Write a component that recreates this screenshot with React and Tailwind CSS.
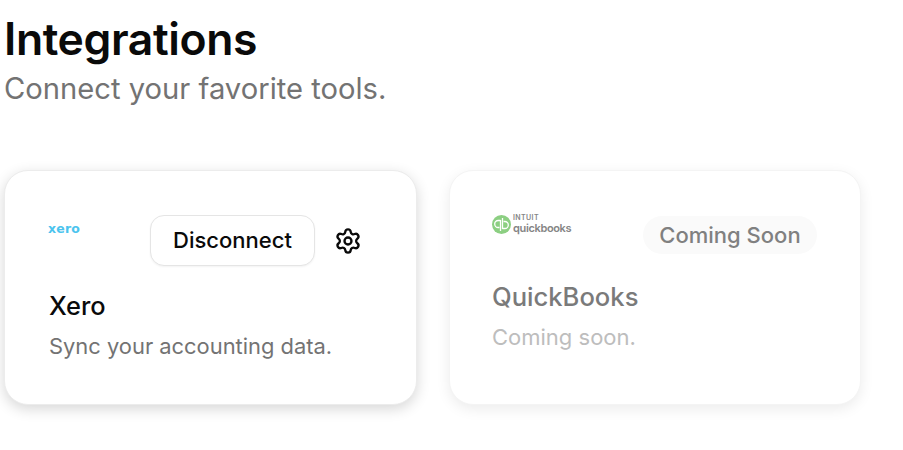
import { Settings } from 'lucide-react';

function QuickBooksLogo() {
  return (
    <div className="flex items-center gap-[2px] -mt-[1px]">
      <svg width="19" height="19" viewBox="0 0 19 19">
        <circle cx="9.5" cy="9.5" r="9.5" fill="#8ccf82" />
        <path d="M8.5 5.5H6.2a3 3 0 0 0 0 7h1.2M8.5 5v11M10.5 13.5h2.3a3 3 0 0 0 0-7h-1.2M10.5 14V3" fill="none" stroke="#fff" strokeWidth="1.3" />
      </svg>
      <div className="flex flex-col gap-[1px] text-[#858585] font-semibold">
        <span className="text-[7px] leading-[8px] tracking-[0.4px]">INTUIT</span>
        <span className="text-[11px] leading-[11px] tracking-[-0.35px]">quickbooks</span>
      </div>
    </div>
  );
}

export default function App() {
  return (
    <div className="w-[903px] h-[450px] bg-white overflow-hidden pl-[4px] pt-[12px] font-['Inter',sans-serif]">
      <h1 className="text-[44.5px] leading-[54px] font-semibold text-[#0a0a0a] tracking-[-0.4px]">Integrations</h1>
      <p className="text-[29.2px] leading-[40px] text-[#737373] mt-[3px]">Connect your favorite tools.</p>

      <div className="flex gap-[32px] mt-[61px]">
        {/* Xero */}
        <div className="w-[413px] h-[235px] rounded-[24px] bg-white border border-[#ececec] shadow-[0_4px_14px_rgba(0,0,0,0.16)] pl-[44px] pt-[44px]">
          <div className="flex items-start justify-between pr-[54px]">
            <span className="text-[#4cc4ee] text-[12.5px] leading-[28px] font-bold tracking-[0.2px] font-['DejaVu_Sans',sans-serif] -ml-[1px] h-[50px]">xero</span>
            <div className="flex items-center gap-[19px]">
              <button className="w-[165px] h-[51px] rounded-[14px] border border-[#e5e5e5] bg-white shadow-[0_1px_2px_rgba(0,0,0,0.05)] text-[22px] font-medium text-[#0a0a0a]">
                Disconnect
              </button>
              <Settings size={28} strokeWidth={2} className="text-[#0a0a0a]" />
            </div>
          </div>
          <h2 className="text-[25.4px] leading-[32px] font-medium text-[#0a0a0a] mt-[24px]">Xero</h2>
          <p className="text-[21.9px] leading-[30px] text-[#737373] mt-[9px]">Sync your accounting data.</p>
        </div>

        {/* QuickBooks */}
        <div className="w-[412px] h-[235px] rounded-[24px] bg-white border border-[#f4f4f4] shadow-[0_4px_14px_rgba(0,0,0,0.08)] pl-[42px] pt-[44px]">
          <div className="flex items-start justify-between pr-[43px]">
            <QuickBooksLogo />
            <span className="w-[174px] h-[38px] mt-[1px] rounded-full bg-[#fafafa] text-[22px] leading-[38px] text-center font-medium text-[#808080]">
              Coming Soon
            </span>
          </div>
          <h2 className="text-[25.6px] leading-[32px] font-medium text-[#7a7a7a] mt-[27px]">QuickBooks</h2>
          <p className="text-[22px] leading-[30px] text-[#bdbdbd] mt-[9px]">Coming soon.</p>
        </div>
      </div>
    </div>
  );
}
